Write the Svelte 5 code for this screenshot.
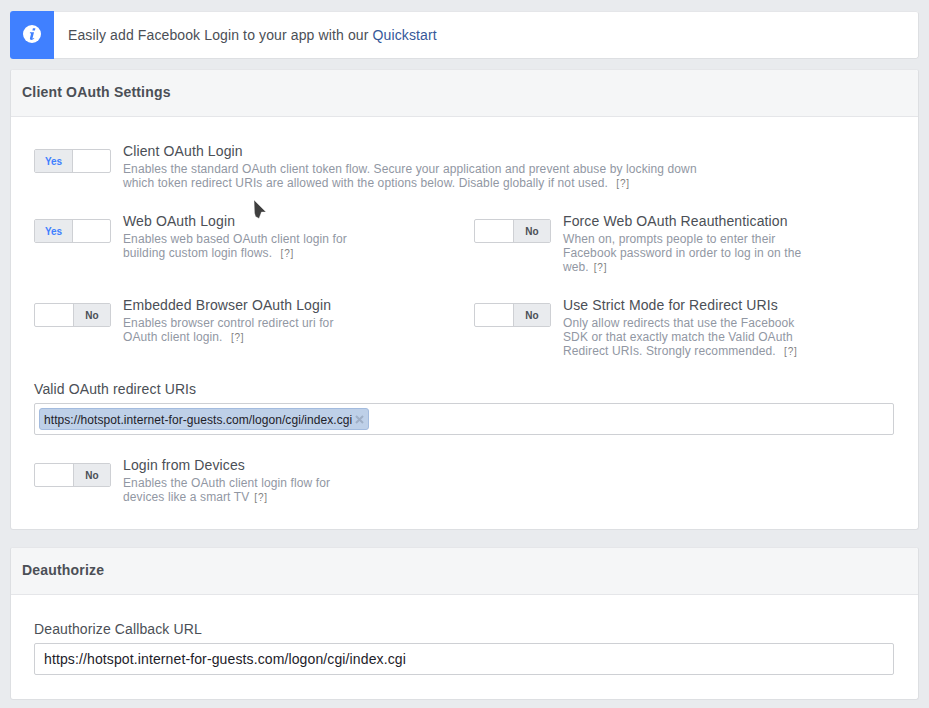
<script>
	const help = '[?]';
</script>

{#snippet toggle(on)}
	<div class="toggle">
		{#if on}
			<span class="knob yes">Yes</span>
			<span class="blank"></span>
		{:else}
			<span class="blank"></span>
			<span class="knob no">No</span>
		{/if}
	</div>
{/snippet}

{#snippet option(on, title, lines)}
	<div class="option">
		{@render toggle(on)}
		<div class="copy">
			<div class="title">{title}</div>
			<div class="desc">
				{#each lines as line, i}
					<div class="line">
						{line}{#if i === lines.length - 1}<span class="help">{help}</span>{/if}
					</div>
				{/each}
			</div>
		</div>
	</div>
{/snippet}

<div class="page">
	<div class="card notice">
		<div class="notice-icon">
			<svg width="18" height="18" viewBox="0 0 18 18">
				<circle cx="9" cy="9" r="9" fill="#fff" />
				<path d="M9.9 3.2h2.5l-.5 2.3H9.4zM7 7.2h4l-1.5 6c-.1.4.3.5.6.3l.9-.7.3.5c-.9 1-1.9 1.6-3 1.6-1.2 0-1.6-.7-1.3-1.8l1-4.2c.1-.5-.1-.7-.5-.7H6.8z" fill="#4080ff" />
			</svg>
		</div>
		<div class="notice-text">Easily add Facebook Login to your app with our <span class="link">Quickstart</span></div>
	</div>

	<div class="card settings">
		<div class="card-head">Client OAuth Settings</div>
		<div class="card-body">
			{@render option(true, 'Client OAuth Login', ['Enables the standard OAuth client token flow. Secure your application and prevent abuse by locking down', 'which token redirect URIs are allowed with the options below. Disable globally if not used.  '])}

			<div class="grid">
				{@render option(true, 'Web OAuth Login', ['Enables web based OAuth client login for', 'building custom login flows.  '])}
				{@render option(false, 'Force Web OAuth Reauthentication', ['When on, prompts people to enter their', 'Facebook password in order to log in on the', 'web. '])}
				{@render option(false, 'Embedded Browser OAuth Login', ['Enables browser control redirect uri for', 'OAuth client login.  '])}
				{@render option(false, 'Use Strict Mode for Redirect URIs', ['Only allow redirects that use the Facebook', 'SDK or that exactly match the Valid OAuth', 'Redirect URIs. Strongly recommended.  '])}
			</div>

			<div class="field">
				<div class="label">Valid OAuth redirect URIs</div>
				<div class="tags">
					<span class="tag">https://hotspot.internet-for-guests.com/logon/cgi/index.cgi<svg class="tag-x" width="9" height="9" viewBox="0 0 9 9"><path d="M1 1l7 7M8 1l-7 7" stroke="#9fafc6" stroke-width="2" /></svg></span>
				</div>
			</div>

			{@render option(false, 'Login from Devices', ['Enables the OAuth client login flow for', 'devices like a smart TV '])}
		</div>
	</div>

	<div class="card deauth">
		<div class="card-head">Deauthorize</div>
		<div class="card-body short">
			<div class="label">Deauthorize Callback URL</div>
			<div class="input">https://hotspot.internet-for-guests.com/logon/cgi/index.cgi</div>
		</div>
	</div>

	<svg class="cursor" width="15" height="22" viewBox="0 0 15 22">
		<path d="M1 1L13 13H8.5L6 19.5L2.5 17.5L1.5 14z" fill="#3f3f3f" stroke="#fff" stroke-opacity=".6" stroke-width=".6" />
	</svg>
</div>

<style>
	:global(body) {
		background: #e9ebee;
		font-family: 'Liberation Sans', Arial, sans-serif;
		letter-spacing: 0.12px;
	}

	.page {
		position: relative;
		height: 708px;
		overflow: hidden;
		padding: 11px 10px 0 10px;
		box-sizing: border-box;
	}

	.card {
		background: #fff;
		border: 1px solid #dddfe2;
		border-top-color: #e5e6e9;
		border-radius: 3px;
		box-sizing: border-box;
	}

	.notice {
		display: flex;
		height: 48px;
		border: 0;
	}

	.notice-icon {
		width: 44px;
		background: #4080ff;
		border-radius: 3px 0 0 3px;
		display: flex;
		align-items: center;
		justify-content: center;
		padding-bottom: 3px;
		box-sizing: border-box;
	}

	.notice-text {
		flex: 1;
		padding-left: 14px;
		font-size: 14px;
		line-height: 47px;
		color: #4b4f56;
		border: 1px solid #dddfe2;
		border-top-color: #e5e6e9;
		border-left: 0;
		border-radius: 0 3px 3px 0;
	}

	.link {
		color: #365899;
	}

	.settings {
		margin-top: 10px;
		height: 461px;
	}

	.deauth {
		margin-top: 17px;
		height: 153px;
	}

	.card-head {
		height: 46px;
		line-height: 44px;
		padding-left: 11px;
		background: #f5f6f7;
		border-bottom: 1px solid #e5e6e9;
		border-radius: 3px 3px 0 0;
		font-size: 14px;
		font-weight: bold;
		letter-spacing: 0.19px;
		color: #4b4f56;
	}

	.card-body {
		padding: 26px 24px 0 23px;
	}

	.card-body.short {
		padding-top: 26px;
	}

	.grid {
		display: grid;
		grid-template-columns: 440px 1fr;
		margin-top: 22px;
		grid-auto-rows: 84px;
	}

	.option {
		display: flex;
		gap: 12px;
		align-items: flex-start;
	}

	.toggle {
		display: flex;
		width: 77px;
		height: 24px;
		margin-top: 6px;
		flex: none;
		box-sizing: border-box;
		border: 1px solid #ced0d4;
		border-radius: 2px;
		background: #fff;
		overflow: hidden;
	}

	.knob {
		background: #e9ebee;
		font-size: 10px;
		font-weight: bold;
		letter-spacing: 0;
		line-height: 23px;
		text-align: center;
	}

	.yes {
		width: 37px;
		color: #4080ff;
		border-right: 1px solid #ced0d4;
	}

	.no {
		width: 36px;
		color: #4b4f56;
		border-left: 1px solid #ced0d4;
	}

	.blank {
		flex: 1;
	}

	.title {
		font-size: 14px;
		line-height: 16px;
		color: #4b4f56;
	}

	.desc {
		margin-top: 3px;
		font-size: 12px;
		line-height: 14px;
		letter-spacing: 0.11px;
		color: #9197a3;
	}

	.line {
		white-space: pre;
	}

	.help {
		margin-left: 1.5px;
		font-size: 10px;
		letter-spacing: 0.8px;
		color: #7f7f7f;
	}

	.label {
		font-size: 14px;
		line-height: 16px;
		color: #4b4f56;
	}

	.tags {
		display: flex;
		align-items: flex-start;
		margin-top: 6px;
		margin-bottom: 22px;
		height: 32px;
		box-sizing: border-box;
		border: 1px solid #ced0d4;
		border-radius: 2px;
		padding: 4px;
	}

	.tag {
		display: flex;
		align-items: center;
		height: 22px;
		box-sizing: border-box;
		padding: 1px 4px 0;
		font-size: 12px;
		letter-spacing: 0.07px;
		color: #1d2129;
		background: #bed0e8;
		border: 1px solid #a3bbde;
		border-radius: 3px;
	}

	.tag-x {
		margin: -1px 0 0 3px;
	}

	.input {
		margin-top: 6px;
		height: 32px;
		line-height: 30px;
		box-sizing: border-box;
		border: 1px solid #ced0d4;
		border-radius: 2px;
		padding: 0 9px;
		font-size: 14px;
		color: #1d2129;
	}

	.cursor {
		position: absolute;
		left: 253px;
		top: 199px;
	}
</style>
